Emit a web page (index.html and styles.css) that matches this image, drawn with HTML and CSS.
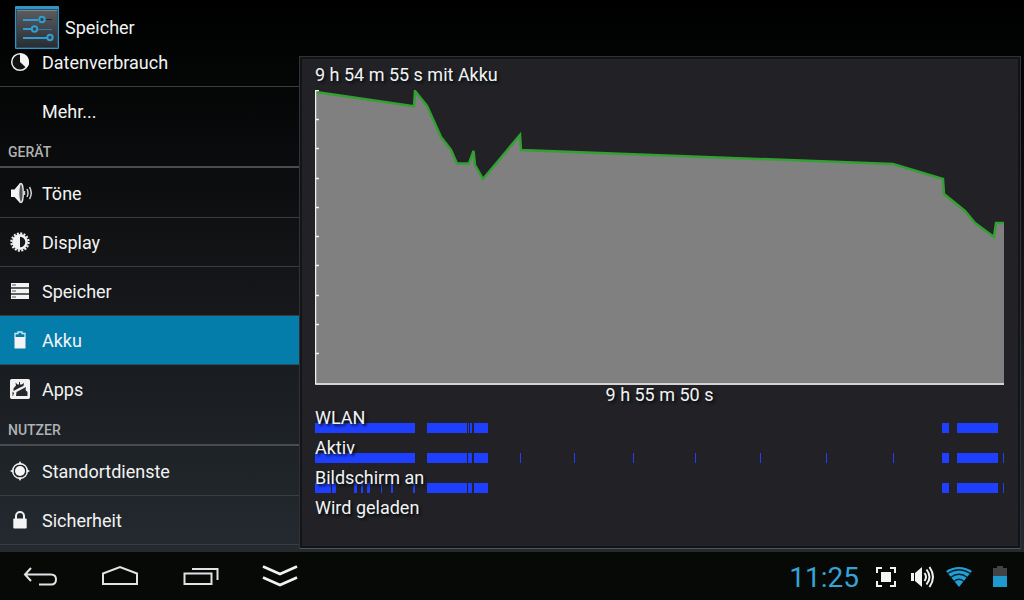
FILE: index.html
```html
<!DOCTYPE html>
<html lang="de">
<head>
<meta charset="utf-8">
<title>Einstellungen – Akku</title>
<link rel="stylesheet" href="styles.css">
</head>
<body>
<header class="topbar">
  <svg class="app-icon" viewBox="0 0 44 43" aria-hidden="true">
    <defs><linearGradient id="tile" x1="0" y1="0" x2="0" y2="1"><stop offset="0" stop-color="#5b5d61"/><stop offset="1" stop-color="#292c31"/></linearGradient></defs>
    <rect width="44" height="43" rx="1" fill="#2f94c6"/>
    <rect x="1.500" y="3.500" width="41" height="38" fill="url(#tile)" stroke="#25506a"/>
    <path d="M2 4.500h40" stroke="#7f8487"/>
    <path d="M8 14h15M8 23h8M8 32h24" stroke="#2f9fd3" stroke-width="2"/>
    <path d="M30 13.500h7" stroke="#20262b"/><path d="M22 23.500h15" stroke="#2880aa"/>
    <g fill="#3b4146" stroke="#2f9fd3" stroke-width="2"><circle cx="27" cy="13.500" r="2.700"/><circle cx="19.500" cy="23" r="2.700"/><circle cx="35" cy="31.500" r="2.700"/></g>
  </svg>
  <h1 class="title">Speicher</h1>
</header>
<div class="content">
  <nav class="sidebar" aria-label="Einstellungen">
    <ul class="list">
      <li><a class="row" href="#daten">
        <svg class="icon" viewBox="0 0 24 24"><circle cx="12" cy="12" r="8.300" fill="#111" stroke="#e8e8e8" stroke-width="1.500"/><path d="M12 12V3.500A8.500 8.500 0 0 1 18.500 18z" fill="#f4f4f4"/></svg>
        Datenverbrauch</a></li>
      <li><a class="row last" href="#mehr"><span class="icon"></span>Mehr...</a></li>
    </ul>
    <h2 class="category">GERÄT</h2>
    <ul class="list">
      <li><a class="row" href="#toene">
        <svg class="icon" viewBox="0 0 24 24"><path d="M3 8.500H6.500L12 2v20L6.500 16H3z" fill="#f4f4f4"/><ellipse cx="13" cy="12" rx="2.300" ry="9.500" fill="#555" stroke="#eee" stroke-width="1.300"/><path d="M16.500 10v4M19 8q2 4 0 8M21.500 6q3.500 6 0 12" fill="none" stroke="#ccc" stroke-width="1.500"/></svg>
        Töne</a></li>
      <li><a class="row" href="#display">
        <svg class="icon" viewBox="0 0 24 24"><circle cx="12" cy="12" r="8.600" fill="none" stroke="#f2f2f2" stroke-width="2.200" stroke-dasharray="2 1.377"/><circle cx="12" cy="12" r="6.600" fill="#17181a" stroke="#f2f2f2" stroke-width="2.600"/><path d="M12 5a7 7 0 0 0 0 14z" fill="#f2f2f2"/></svg>
        Display</a></li>
      <li><a class="row" href="#speicher">
        <svg class="icon" viewBox="0 0 24 24"><path d="M3 4h18v4H3zM3 10h18v4H3zM3 16h18v4H3z" fill="#f4f4f4"/><path d="M3 9h18M3 15h18" stroke="#777" stroke-width="1.500"/><path d="M4 6h4M4 12h4M4 18h4" stroke="#555"/></svg>
        Speicher</a></li>
      <li><a class="row active" href="#akku" aria-current="page">
        <svg class="icon" viewBox="0 0 24 24"><path d="M7 9.500V5.500h3V4h4v1.500h3V9.500" fill="none" stroke="#cfe8f2" stroke-width="1.300"/><path d="M6.500 9h11v11.500h-11z" fill="#f4f4f4"/></svg>
        Akku</a></li>
      <li><a class="row last" href="#apps">
        <svg class="icon" viewBox="0 0 24 24"><rect x="2.800" y="2.800" width="18.400" height="18.400" rx="1" fill="#f2f2f2" stroke="#f2f2f2" stroke-width="1.600"/><path d="M5.500 11.500 8 8.500 7.500 5.500 9.500 7.500H11V5H12V7.500H13.500L16 6 15.500 9 11 11 5.500 14zM4.500 14.500 6 16 5 19H4.500zM8 19 8.500 15 18 10 17.500 13 19.500 15V19z" fill="#24272b"/></svg>
        Apps</a></li>
    </ul>
    <h2 class="category">NUTZER</h2>
    <ul class="list">
      <li><a class="row" href="#standort">
        <svg class="icon" viewBox="0 0 24 24"><circle cx="12" cy="12" r="7.300" fill="none" stroke="#f0f0f0" stroke-width="1.400"/><circle cx="12" cy="12" r="5" fill="#f6f6f6"/><path d="M12 2l2 3.500h-4zM12 22l2-3.500h-4zM2 12l3.500-2v4zM22 12l-3.500-2v4z" fill="#f4f4f4"/></svg>
        Standortdienste</a></li>
      <li><a class="row" href="#sicherheit">
        <svg class="icon" viewBox="0 0 24 24"><path d="M8 11V8a4 4 0 0 1 8 0v3" fill="none" stroke="#f0f0f0" stroke-width="2"/><rect x="5.300" y="10.500" width="13.400" height="10" rx="1" fill="#f4f4f4"/></svg>
        Sicherheit</a></li>
    </ul>
  </nav>
  <main class="panel">
    <section class="history">
      <h2 class="caption">9 h 54 m 55 s mit Akku</h2>
      <svg class="chart" viewBox="0 0 689 295" preserveAspectRatio="none" role="img" aria-label="Akkuverlauf">
        <path d="M1 2 97 16H99L100 1 112 16 126 47 136 60 142 73.500H154L158.500 61 160 75 168 89 205 45 206 60 578 74 628 89 629 104 650 121 660 133 679 147 681 133H689V295H1z" fill="#808080"/>
        <path d="M1 2 97 16H99L100 1 112 16 126 47 136 60 142 73.500H154L158.500 61 160 75 168 89 205 45 206 60 578 74 628 89 629 104 650 121 660 133 679 147 681 133H689" fill="none" stroke="#33a033" stroke-width="2.500"/>
        <path d="M.5 0V294M0 .5H4M0 29.500H4M0 58.500H4M0 88.500H4M0 117.500H4M0 146.500H4M0 175.500H4M0 205.500H4M0 234.500H4M0 263.500H4" fill="none" stroke="#f0f0f0" stroke-width="1.500"/>
        <path d="M0 294H689" stroke="#f0f0f0" stroke-width="1.500"/>
      </svg>
      <p class="duration">9 h 55 m 50 s</p>
      <div class="track"><span class="label">WLAN</span>
        <svg class="bars" viewBox="0 0 689 10" preserveAspectRatio="none" aria-hidden="true"><path d="M0 0H100V10H0zM112 0H152V10H112zM153 0H154V10H153zM155 0H157V10H155zM159 0H173V10H159zM627 0H634V10H627zM642 0H683V10H642z"/></svg></div>
      <div class="track"><span class="label">Aktiv</span>
        <svg class="bars" viewBox="0 0 689 10" preserveAspectRatio="none" aria-hidden="true"><path d="M0 0H100V10H0zM112 0H152V10H112zM153 0H157V10H153zM159 0H173V10H159zM205 0H206V10H205zM259 0H260V10H259zM318 0H319V10H318zM380 0H381V10H380zM445 0H446V10H445zM511 0H512V10H511zM578 0H579V10H578zM627 0H634V10H627zM642 0H683V10H642zM688 0H689V10H688z"/></svg></div>
      <div class="track"><span class="label">Bildschirm an</span>
        <svg class="bars" viewBox="0 0 689 10" preserveAspectRatio="none" aria-hidden="true"><path d="M0 0H16V10H0zM17 0H21V10H17zM39 0H42V10H39zM46 0H48V10H46zM52 0H55V10H52zM66 0H67V10H66zM76 0H78V10H76zM98 0H100V10H98zM112 0H152V10H112zM153 0H157V10H153zM159 0H173V10H159zM627 0H634V10H627zM642 0H683V10H642zM688 0H689V10H688z"/></svg></div>
      <div class="track"><span class="label">Wird geladen</span></div>
    </section>
  </main>
</div>
<footer class="sysbar">
  <div class="keys">
    <button class="key" type="button" aria-label="Zurück"><svg viewBox="0 0 40 24"><path d="M11 4 5 10.500 11 17M5 10.500H31Q36 10.500 36 15.500T31 20.500H19" fill="none" stroke="#e2e2e6" stroke-width="2"/></svg></button>
    <button class="key" type="button" aria-label="Startseite"><svg viewBox="0 0 40 24"><path d="M3 20V9.500L20 3 37 9.500V20z" fill="none" stroke="#e2e2e6" stroke-width="2"/></svg></button>
    <button class="key" type="button" aria-label="Letzte Apps"><svg viewBox="0 0 40 24"><path d="M4.500 9.500H31.500V20H4.500zM12 5H37.500V16" fill="none" stroke="#e2e2e6" stroke-width="2"/></svg></button>
    <button class="key" type="button" aria-label="Leiste ausblenden"><svg viewBox="0 0 40 24"><path d="M3 2.500 20 10 37 2.500M3 13.500 20 21 37 13.500" fill="none" stroke="#f2f2f2" stroke-width="2.600"/></svg></button>
  </div>
  <div class="status">
    <time class="clock">11:25</time>
    <svg class="shot" viewBox="0 0 20 20"><path d="M1 6V1H6M14 1H19V6M19 14V19H14M6 19H1V14" fill="none" stroke="#f2f2f2" stroke-width="2"/><rect x="5" y="5" width="10" height="10" fill="#f4f4f4"/></svg>
    <svg class="sound" viewBox="0 0 24 22"><path d="M0 7H3V15H0zM4 7 11 1V21L4 15z" fill="#f4f4f4"/><path d="M13.500 7q3 4 0 8M15.500 3.500Q21.500 11 15.500 18.500M18.500 1Q25.500 11 18.500 21" fill="none" stroke="#f2f2f2" stroke-width="2"/></svg>
    <svg class="wifi" viewBox="0 0 26 20"><path d="M0 4Q13-4 26 4L13 20z" fill="#239fd4"/><path d="M1.500 6.500Q13-1 24.500 6.500M4.500 10.500Q13 4 21.500 10.500M8 14.500Q13 10 18 14.500" fill="none" stroke="#07222f" stroke-width="1.300"/></svg>
    <svg class="battery" viewBox="0 0 14 22"><path d="M0 2H4V0H10V2H14V11H0z" fill="#434345"/><path d="M0 10H14V21H0z" fill="#1f98cd"/></svg>
  </div>
</footer>
</body>
</html>
```
FILE: styles.css
```css
* { box-sizing: border-box; }
body {
  margin: 0;
  height: 100vh;
  display: flex;
  flex-direction: column;
  overflow: hidden;
  background: linear-gradient(#000 0, #020303 8%, #0a0c0d 28%, #15171a 50%, #20252a 80%, #272d33 100%);
  color: #f3f3f3;
  font-family: Roboto, "Noto Sans", sans-serif;
  font-size: 18px;
}
h1, h2, p, ul { margin: 0; padding: 0; font-weight: 400; }
ul { list-style: none; }
svg { display: block; }

.topbar {
  flex: none;
  height: 50px;
  display: flex;
  align-items: center;
  gap: 6px;
  padding: 5px 15px 0;
}
.app-icon { width: 44px; height: 43px; }
.title { font-size: 18px; }

.content {
  flex: 1;
  min-height: 0;
  display: grid;
  grid-template-columns: 299fr 725fr;
}
.sidebar { overflow: hidden; }
.sidebar .list:first-child { margin-top: -12px; }
.row {
  display: flex;
  align-items: center;
  gap: 10px;
  height: 49px;
  padding: 0 8px;
  border-bottom: 1px solid #3a3d40;
  color: inherit;
  text-decoration: none;
}
.row.last { height: 48px; border-bottom: 0; }
.row.active { background: #047dab; border-bottom-color: #245365; }
.icon { flex: none; width: 24px; height: 24px; }
.category {
  height: 33px;
  margin-bottom: 1px;
  padding-left: 8px;
  border-bottom: 2px solid #4a4d50;
  color: #b0b2b4;
  font-size: 14px;
  font-weight: 500;
  line-height: 34px;
}

.panel {
  margin: 6px 3px 3px 0;
  border: 1px solid #303237;
  border-bottom-color: #515458;
  background: #131417;
  padding: 2px;
  display: flex;
}
.history {
  flex: 1;
  min-width: 0;
  padding: 1px 14px 0 13px;
  background: #222226;
  text-shadow: 2px 2px 3px #000c10;
}
.caption { font-size: 18px; line-height: 30px; }
.chart { width: 100%; height: 295px; }
.duration { height: 18px; line-height: 20px; text-align: center; }
.track { display: grid; height: 30px; }
.label, .bars { grid-area: 1 / 1; }
.label { z-index: 1; line-height: 30px; }
.bars { align-self: end; width: 100%; height: 10px; fill: #1f3fff; shape-rendering: crispEdges; }

.sysbar {
  flex: none;
  height: 48px;
  display: flex;
  justify-content: space-between;
  background: #070907;
}
.keys, .status { display: flex; align-items: center; }
.key {
  width: 80px;
  height: 48px;
  padding: 0;
  border: 0;
  background: none;
  display: grid;
  place-items: center;
}
.key svg { width: 40px; height: 24px; }
.status { padding: 2px 17px 0 0; }
.clock { margin-right: 17px; color: #36a3d6; font-size: 28px; }
.shot { width: 20px; height: 20px; margin-right: 15px; }
.sound { width: 24px; height: 22px; margin-right: 11px; }
.wifi { width: 26px; height: 20px; margin-right: 21px; }
.battery { width: 14px; height: 22px; }
```
